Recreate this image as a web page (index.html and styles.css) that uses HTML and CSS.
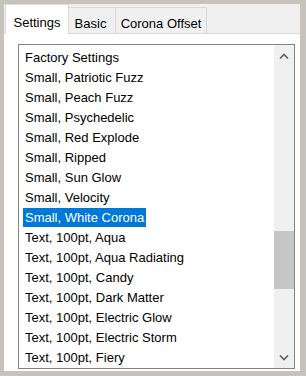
FILE: index.html
```html
<html>
    <head>
        <title>Settings</title>
        <meta charset="utf-8">
        <link rel="stylesheet" href="styles.css">
    </head>
    <body>
        <main class="window">
            <nav class="tabs">
                <span class="tab active">Settings</span>
                <span class="tab tab-basic">Basic</span>
                <span class="tab tab-offset">Corona Offset</span>
            </nav>
            <section class="panel">
                <div class="listbox">
                    <ul class="items">
                        <li><span>Factory Settings</span></li>
                        <li><span>Small, Patriotic Fuzz</span></li>
                        <li><span>Small, Peach Fuzz</span></li>
                        <li><span>Small, Psychedelic</span></li>
                        <li><span>Small, Red Explode</span></li>
                        <li><span>Small, Ripped</span></li>
                        <li><span>Small, Sun Glow</span></li>
                        <li><span>Small, Velocity</span></li>
                        <li class="selected"><span>Small, White Corona</span></li>
                        <li><span>Text, 100pt, Aqua</span></li>
                        <li><span>Text, 100pt, Aqua Radiating</span></li>
                        <li><span>Text, 100pt, Candy</span></li>
                        <li><span>Text, 100pt, Dark Matter</span></li>
                        <li><span>Text, 100pt, Electric Glow</span></li>
                        <li><span>Text, 100pt, Electric Storm</span></li>
                        <li><span>Text, 100pt, Fiery</span></li>
                    </ul>
                    <div class="scrollbar">
                        <div class="arrow">
                            <svg width="10" height="6" viewBox="0 0 10 6"><path d="M1 5.5 L5 1.5 L9 5.5" fill="none" stroke="#606060" stroke-width="1.6"/></svg>
                        </div>
                        <div class="track">
                            <div class="thumb"></div>
                        </div>
                        <div class="arrow">
                            <svg width="10" height="6" viewBox="0 0 10 6"><path d="M1 0.5 L5 4.5 L9 0.5" fill="none" stroke="#606060" stroke-width="1.6"/></svg>
                        </div>
                    </div>
                </div>
            </section>
        </main>
    </body>
</html>
```

FILE: styles.css
```css
html, body{
    margin: 0;
    padding: 0;
}
body{
    background-color: #c6c2be;
    width: 306px;
    height: 376px;
    padding: 4px 6px 5px 4px;
    box-sizing: border-box;
    font-family: "Liberation Sans", Arial, sans-serif;
    font-size: 13px;
    color: #000;
    cursor: default;
}
.window{
    display: flex;
    flex-direction: column;
    width: 296px;
    height: 367px;
    background-color: #fff;
}
.tabs{
    display: flex;
    align-items: flex-end;
    height: 29px;
    padding-left: 1px;
    background-color: #f0f0f0;
    border-bottom: 1px solid #d9d9d9;
}
.tab{
    box-sizing: border-box;
    height: 26px;
    line-height: 16px;
    padding-top: 8px;
    text-align: center;
    background-color: #f0f0f0;
    border: 1px solid #d9d9d9;
    border-bottom: none;
    border-left: none;
}
.tab.active{
    width: 64px;
    height: 30px;
    padding-top: 10px;
    margin-bottom: -1px;
    background-color: #fff;
    border-left: 1px solid #d9d9d9;
    position: relative;
}
.tab-basic{
    width: 47px;
    padding-right: 3px;
}
.tab-offset{
    width: 91px;
}
.panel{
    flex: 1;
    padding: 10px 5px 4px 14px;
    display: flex;
}
.listbox{
    flex: 1;
    display: flex;
    border: 1px solid #828282;
    overflow: hidden;
}
.items{
    flex: 1;
    margin: 0;
    padding: 3px 0 0 4px;
    list-style: none;
    overflow: hidden;
}
.items li{
    height: 20px;
    line-height: 20px;
    white-space: nowrap;
}
.items li span{
    display: inline-block;
    padding: 0 2px;
}
.items li.selected span{
    background-color: #0078d7;
    color: #fff;
    line-height: 19px;
}
.scrollbar{
    width: 20px;
    display: flex;
    flex-direction: column;
    background-color: #f0f0f0;
}
.arrow{
    height: 21px;
    display: flex;
    align-items: center;
    justify-content: center;
}
.track{
    flex: 1;
    padding-top: 165px;
}
.thumb{
    height: 58px;
    background-color: #c6c6c6;
}
```
